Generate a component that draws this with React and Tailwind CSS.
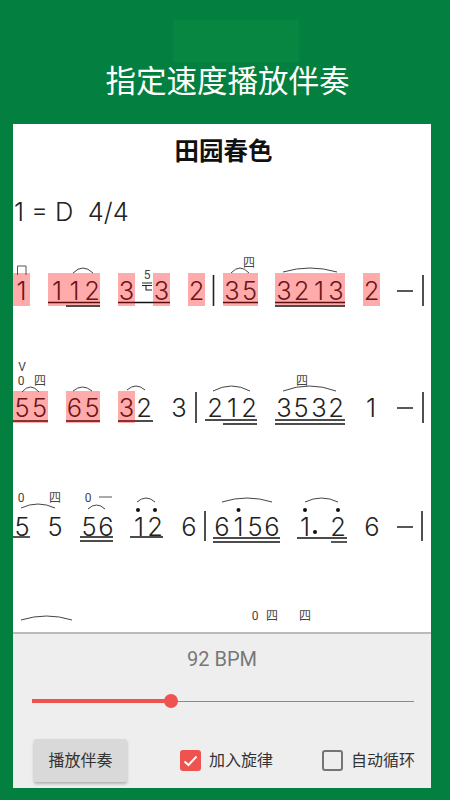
import React from 'react';

const SANS = "font-['Roboto','Noto_Sans_CJK_SC',sans-serif]";
const NOTE = "font-['Inter',sans-serif]";

// page coordinates of the sheet's top left corner
const OX = 13;
const OY = 124;

// [x, y, text]
const NOTES = [
  [21.5, 291, '1'], [57, 291, '1'], [74.5, 291, '1'], [92, 291, '2'], [126.5, 291, '3'], [161.5, 291, '3'], [196.5, 291, '2'],
  [232, 291, '3'], [249.5, 291, '5'], [284, 291, '3'], [301.5, 291, '2'], [319, 291, '1'], [336, 291, '3'], [371.5, 291, '2'],
  [22, 408, '5'], [39.5, 408, '5'], [74.5, 408, '6'], [92, 408, '5'], [126.5, 408, '3'], [144, 408, '2'], [179, 408, '3'],
  [215, 408, '2'], [232, 408, '1'], [249, 408, '2'], [284, 408, '3'], [301, 408, '5'], [319, 408, '3'], [336, 408, '2'], [371, 408, '1'],
  [22, 527, '5'], [55, 527, '5'], [89, 527, '5'], [106, 527, '6'], [139, 527, '1'], [155, 527, '2'], [189, 527, '6'],
  [222, 527, '6'], [238.5, 527, '1'], [255, 527, '5'], [272, 527, '6'], [305, 527, '1'], [338, 527, '2'], [372, 527, '6'],
];

const MARKS = [
  [249, 263, '四'], [147, 275, '5'],
  [22, 367, 'V'], [21, 381, '0'], [40, 381, '四'], [302, 381, '四'],
  [21, 498, '0'], [55, 498, '四'], [88, 498, '0'],
  [255, 616, '0'], [272, 616, '四'], [305, 616, '四'],
];

// [x, y, w, h]
const HIGHLIGHTS = [
  [13, 273, 17, 33], [48, 273, 52, 33], [118, 273, 17, 33], [153, 273, 17, 33], [188, 273, 17, 33],
  [223, 273, 35, 33], [275, 273, 70, 33], [363, 273, 17, 33],
  [13, 391, 35, 32], [66, 391, 34, 32], [118, 391, 17, 32],
];

// [x1, x2, y]
const BEAMS = [
  [48, 100, 302.5], [66, 100, 306], [118, 170, 302.5], [223, 258, 302.5], [275, 345, 302.5], [275, 345, 306],
  [13, 48, 421], [66, 100, 421], [118, 153, 421], [205, 257, 420], [223, 257, 424], [275, 345, 420], [275, 345, 424],
  [13, 30, 537], [80, 113, 537], [80, 113, 541], [130, 163, 537], [213, 280, 538], [213, 280, 542],
  [297, 347, 538], [331, 347, 542],
  [397, 413, 291], [397, 413, 408], [397, 413, 527],
];

// [x, y1, y2]
const BARS = [
  [213.5, 275, 306], [423, 275, 306],
  [196, 392, 423], [423, 392, 423],
  [205, 511, 541], [422, 511, 541],
];

// [x1, x2, y, height]
const SLURS = [
  [73, 93, 273, 5], [231, 249, 273, 5], [283, 337, 272, 4],
  [22, 39, 392, 5], [73, 92, 391, 4], [127, 145, 390, 4], [213, 250, 391, 5], [283, 336, 391, 5],
  [21, 55, 508, 4], [88, 105, 509, 4], [137, 155, 502, 4], [222, 272, 502, 4], [305, 338, 502, 4],
  [21, 72, 620, 4],
];

const DOTS = [
  [138, 510], [155, 510], [238.5, 510], [305, 510], [338, 510], [315, 532],
];

function Score() {
  return (
    <div className="relative h-[508px] overflow-hidden bg-white">
      <h2 className={`${SANS} pt-[14px] pl-[3px] text-center text-[24.5px] leading-[28px] font-bold text-[#111]`}>田园春色</h2>
      <p className={`${NOTE} mt-[30px] pl-[1px] text-[25.5px] leading-[32px] font-[350] whitespace-pre text-[#222]`}>1 = D  4/4</p>

      {NOTES.map(([x, y, t], i) => (
        <span
          key={i}
          className={`${NOTE} absolute -translate-x-1/2 -translate-y-1/2 text-[25.5px] leading-none font-[350] text-[#222]`}
          style={{ left: x - OX, top: y - OY }}
        >
          {t}
        </span>
      ))}

      {MARKS.map(([x, y, t], i) => (
        <span
          key={i}
          className={`${SANS} absolute -translate-x-1/2 -translate-y-1/2 text-[12px] leading-none text-[#444]`}
          style={{ left: x - OX, top: y - OY }}
        >
          {t}
        </span>
      ))}

      <svg className="absolute inset-0 h-full w-full" viewBox="13 124 418 508" fill="none">
        {BEAMS.map(([a, b, y], i) => (
          <line key={i} x1={a} x2={b} y1={y} y2={y} stroke="#111" strokeWidth="1.4" />
        ))}
        {BARS.map(([x, a, b], i) => (
          <line key={i} x1={x} x2={x} y1={a} y2={b} stroke="#222" strokeWidth="1.6" />
        ))}
        {SLURS.map(([a, b, y, h], i) => (
          <path key={i} d={`M${a} ${y}Q${(a + b) / 2} ${y - h * 2} ${b} ${y}`} stroke="#444" strokeWidth="1" />
        ))}
        {DOTS.map(([x, y], i) => (
          <circle key={i} cx={x} cy={y} r="2" fill="#111" />
        ))}
        {/* down bow */}
        <path d="M17.5 275V266H26V275" stroke="#555" strokeWidth="1" />
        {/* grace note tail */}
        <path d="M142 283H152M142 285.5H152M146 286V290H152" stroke="#222" strokeWidth="1.1" />
        {/* finger mark one */}
        <line x1="99" x2="112" y1="497" y2="497" stroke="#555" strokeWidth="1" />
      </svg>

      {HIGHLIGHTS.map(([x, y, w, h], i) => (
        <div
          key={i}
          className="absolute bg-[#ff0000]/[0.33]"
          style={{ left: x - OX, top: y - OY, width: w, height: h }}
        />
      ))}
    </div>
  );
}

function Option({ checked, label }) {
  return (
    <label className="flex items-center gap-[8px]">
      {checked ? (
        <span className="flex h-[21px] w-[21px] items-center justify-center rounded-[3px] bg-[#ef5350]">
          <svg width="15" height="12" viewBox="0 0 15 12" fill="none">
            <path d="M1.5 6.5L5.5 10L13.5 1.5" stroke="white" strokeWidth="2" />
          </svg>
        </span>
      ) : (
        <span className="h-[21px] w-[21px] rounded-[3px] border-2 border-[#757575]" />
      )}
      <span className={`${SANS} pt-[1px] text-[16px] leading-[22px] text-[#333]`}>{label}</span>
    </label>
  );
}

export default function App() {
  return (
    <div className="relative h-[800px] w-[450px] overflow-hidden bg-[#03803f] pr-[19px] pl-[13px]">
      <div className="absolute top-[20px] left-[173px] h-[42px] w-[126px] bg-[#068641]" />
      <h1 className={`${SANS} relative flex h-[124px] items-center justify-center pt-[40px] pl-[11px] text-[30.5px] font-normal text-white`}>
        指定速度播放伴奏
      </h1>
      <Score />
      <div className="h-[156px] border-t-2 border-[#bbbbbb] bg-[#eeeeef]">
        <p className={`${SANS} pt-[13px] text-center text-[20px] leading-[24px] text-[#777]`}>92 BPM</p>
        <div className="mt-[23px] ml-[19px] flex w-[382px] items-center">
          <div className="h-[4px] w-[139px] bg-[#ef5350]" />
          <div className="-mx-[7px] z-10 h-[14px] w-[14px] shrink-0 rounded-full bg-[#ef5350]" />
          <div className="h-[1px] flex-1 bg-[#8a8a8a]" />
        </div>
        <div className="mt-[31px] flex items-center pl-[21px]">
          <button className={`${SANS} h-[43px] w-[93px] rounded-[2px] bg-[#d9d9d9] text-[16px] text-[#333] shadow-[0_2px_3px_rgba(0,0,0,0.25)]`}>
            播放伴奏
          </button>
          <div className="ml-[53px]">
            <Option checked label="加入旋律" />
          </div>
          <div className="ml-[49px]">
            <Option label="自动循环" />
          </div>
        </div>
      </div>
    </div>
  );
}
